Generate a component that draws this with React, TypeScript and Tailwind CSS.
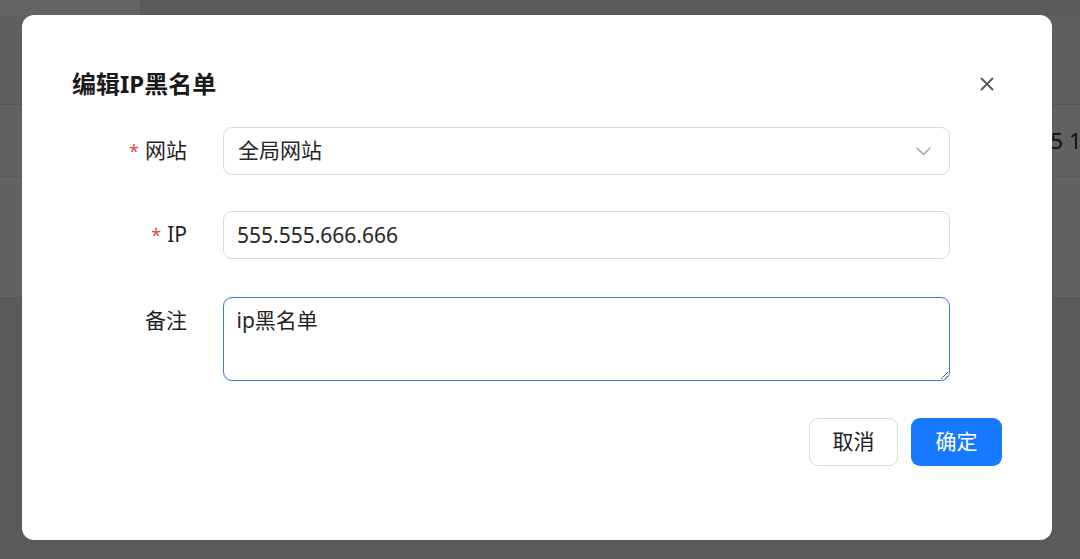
import React from 'react';

const font = { fontFamily: '"Noto Sans", "Noto Sans CJK SC", sans-serif' };

function Label({ text, required }: { text: string; required?: boolean }) {
  return (
    <div className="flex h-[48px] w-[151px] shrink-0 items-center justify-end pr-[36px] text-[21px] text-[#1f1f1f]">
      {required && <span className="mr-[6px] text-[18px] leading-none text-[#dc4a4a]">*</span>}
      <span>{text}</span>
    </div>
  );
}

export default function App() {
  return (
    <div className="relative h-[559px] w-[1080px] overflow-hidden bg-[#5a5a5a]" style={font}>
      {/* page under the mask */}
      <div className="flex flex-col">
        <div className="h-[15px] w-[140px] bg-[#646464]" />
        <div className="h-[90px] border-b border-[#555555] bg-[#5f5f5f]" />
        <div className="flex h-[72px] items-center border-b border-[#595959] bg-[#616161] pl-[1038px] text-[22px] whitespace-nowrap text-[#101010]">
          15 11:23
        </div>
        <div className="h-[121px] border-b border-[#575757] bg-[#626262]" />
      </div>

      {/* modal */}
      <div className="absolute left-[22px] top-[15px] flex h-[525px] w-[1030px] flex-col rounded-[12px] bg-white px-[50px] pt-[51px]">
        <div className="flex h-[36px] items-center justify-between">
          <h1 className="text-[24px] font-bold leading-[36px] text-[#1a1a1a]">编辑IP黑名单</h1>
          <button type="button" className="mr-[4px] flex h-[22px] w-[22px] items-center justify-center">
            <svg width="14" height="14" viewBox="0 0 14 14" fill="none" stroke="#555555" strokeWidth="1.8" strokeLinecap="round">
              <path d="M1.5 1.5 12.5 12.5M12.5 1.5 1.5 12.5" />
            </svg>
          </button>
        </div>

        <form className="mt-[25px] flex flex-col">
          <div className="mb-[36px] flex">
            <Label text="网站" required />
            <div className="flex h-[48px] w-[727px] items-center justify-between rounded-[9px] border border-[#d9d9d9] pl-[14px] pr-[18px] text-[21px] text-[#262626]">
              <span>全局网站</span>
              <svg width="15" height="10" viewBox="0 0 15 10" fill="none" stroke="#a3a3a3" strokeWidth="1.5" strokeLinecap="round" strokeLinejoin="round">
                <path d="M1 2 7.5 8.5 14 2" />
              </svg>
            </div>
          </div>

          <div className="mb-[38px] flex">
            <Label text="IP" required />
            <input
              readOnly
              value="555.555.666.666"
              className="h-[48px] w-[727px] rounded-[9px] border border-[#d9d9d9] px-[13px] text-[21px] text-[#262626] outline-none"
            />
          </div>

          <div className="flex">
            <Label text="备注" />
            <textarea
              readOnly
              value="ip黑名单"
              className="h-[84px] w-[727px] rounded-[9px] border-[1.5px] border-[#3a78d8] px-[12.5px] pt-[6.5px] text-[21px] leading-[31px] text-[#262626] outline-none"
            />
          </div>
        </form>

        <div className="mt-[37px] flex justify-end gap-[13px]">
          <button type="button" className="h-[48px] w-[89px] rounded-[9px] border border-[#d9d9d9] bg-white text-[21px] text-[#1f1f1f]">
            取消
          </button>
          <button type="button" className="h-[48px] w-[91px] rounded-[9px] bg-[#1677ff] text-[21px] text-white">
            确定
          </button>
        </div>
      </div>
    </div>
  );
}
